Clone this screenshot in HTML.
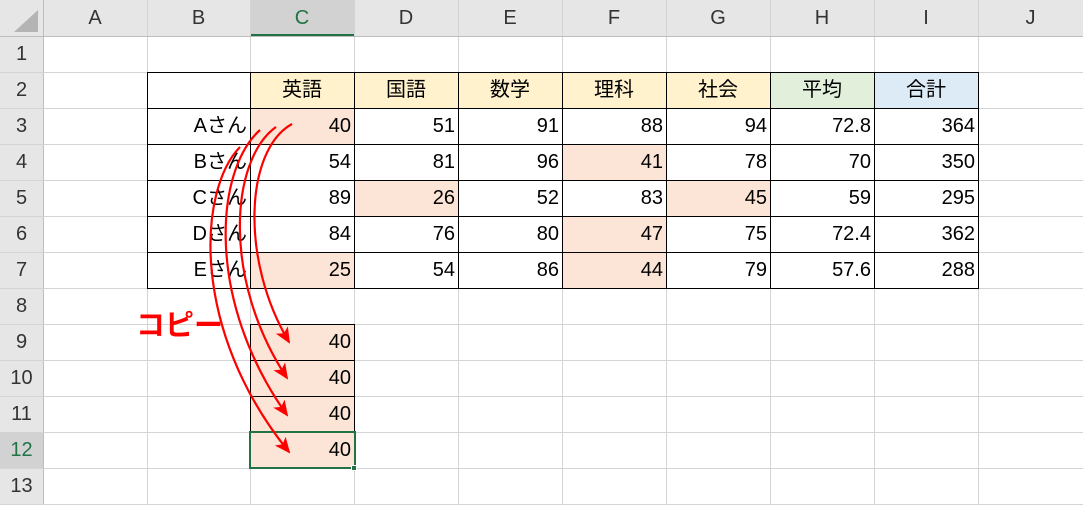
<!DOCTYPE html><html><head><meta charset="utf-8"><style>
body{margin:0;width:1083px;height:505px;overflow:hidden;background:#fff;font-family:"Liberation Sans","Noto Sans CJK JP",sans-serif;position:relative}
.d{position:absolute;box-sizing:border-box}
.t{position:absolute;box-sizing:border-box;font-size:20px;line-height:36px;white-space:nowrap}
</style></head><body>
<div id="g"></div>
<svg class="d" style="left:0;top:0" width="1083" height="505" viewBox="0 0 1083 505">
<defs><marker id="ah" markerWidth="16" markerHeight="14" refX="14" refY="7" orient="auto" markerUnits="userSpaceOnUse"><path d="M0,0 L16,7 L0,14 L4,7Z" fill="#f00"/></marker></defs>
<g fill="none" stroke="#f00" stroke-width="2.2">
<path d="M292,124 C245,150 240,260 289,342" marker-end="url(#ah)"/>
<path d="M276,127 C230,160 222,280 287,378" marker-end="url(#ah)"/>
<path d="M260,130 C215,170 205,300 287,415" marker-end="url(#ah)"/>
<path d="M240,147 C198,190 190,330 289,452" marker-end="url(#ah)"/>
</g></svg>
<script>
var X=[0,43,147,250,354,458,562,666,770,874,978,1083],Y=[0,36,72,108,144,180,216,252,288,324,360,396,432,468,504];
var h='';function d(l,t,w,hh,s){h+='<div class="d" style="left:'+l+'px;top:'+t+'px;width:'+w+'px;height:'+hh+'px;'+s+'"></div>';}
function tx(l,t,w,s,txt){h+='<div class="t" style="left:'+l+'px;top:'+t+'px;width:'+w+'px;'+s+'">'+txt+'</div>';}
d(0,0,1083,36,'background:#e6e6e6');d(0,0,43,505,'background:#e6e6e6');
d(250,0,104,36,'background:#d2d2d2;border-bottom:2px solid #217346');
d(0,432,43,36,'background:#d2d2d2');
var hd=['#fff2cc','#fff2cc','#fff2cc','#fff2cc','#fff2cc','#e2efda','#ddebf7'];
for(var i=0;i<7;i++)d(X[i+3],72,104,36,'background:'+hd[i]);
var pk=[[3,3],[4,6],[5,4],[5,7],[6,6],[7,3],[7,6],[9,3],[10,3],[11,3],[12,3]];
pk.forEach(function(p){d(X[p[1]],Y[p[0]],104,36,'background:#fce4d6')});
for(var i=1;i<X.length-1;i++)d(X[i],0,1,505,'background:'+(i==1?'#bdbdbd':'#d4d4d4'));
for(var j=1;j<Y.length;j++)d(0,Y[j],1083,1,'background:'+(j==1?'#bdbdbd':'#d4d4d4'));
h+='<svg class="d" style="left:12px;top:8px" width="28" height="26"><path d="M26,2 L26,24 L2,24Z" fill="#b4b4b4"/></svg>';
for(var j=2;j<=7;j++)for(var i=2;i<=9;i++){d(X[i],Y[j],X[i+1]-X[i]+1,37,'border:1px solid #000')}
for(var j=9;j<=11;j++)d(250,Y[j],105,37,'border:1px solid #000');
d(249,431,107,38,'border:2px solid #217346');d(351,465,6,6,'background:#217346;border:1px solid #fff');
var L='ABCDEFGHIJ';for(var i=0;i<10;i++)tx(X[i+1],0,X[i+2]-X[i+1],'text-align:center;color:'+(i==2?'#217346':'#333'),L[i]);
for(var j=1;j<=13;j++)tx(0,Y[j],43,'text-align:center;color:'+(j==12?'#217346':'#333'),j);
var hn=['英語','国語','数学','理科','社会','平均','合計'];
for(var i=0;i<7;i++)tx(X[i+3],72,104,'text-align:center',hn[i]);
var rows=[['Aさん',40,51,91,88,94,72.8,364],['Bさん',54,81,96,41,78,70,350],['Cさん',89,26,52,83,45,59,295],['Dさん',84,76,80,47,75,72.4,362],['Eさん',25,54,86,44,79,57.6,288]];
rows.forEach(function(r,k){for(var i=0;i<8;i++)tx(X[i+2],Y[k+3],X[i+3]-X[i+2]-3,'text-align:right',r[i]);});
for(var j=9;j<=12;j++)tx(250,Y[j],101,'text-align:right','40');
tx(136,306,120,'color:#f00;font-weight:bold;font-size:29px;line-height:40px','コピー');
document.getElementById('g').outerHTML=h;
</script>
</body></html>
